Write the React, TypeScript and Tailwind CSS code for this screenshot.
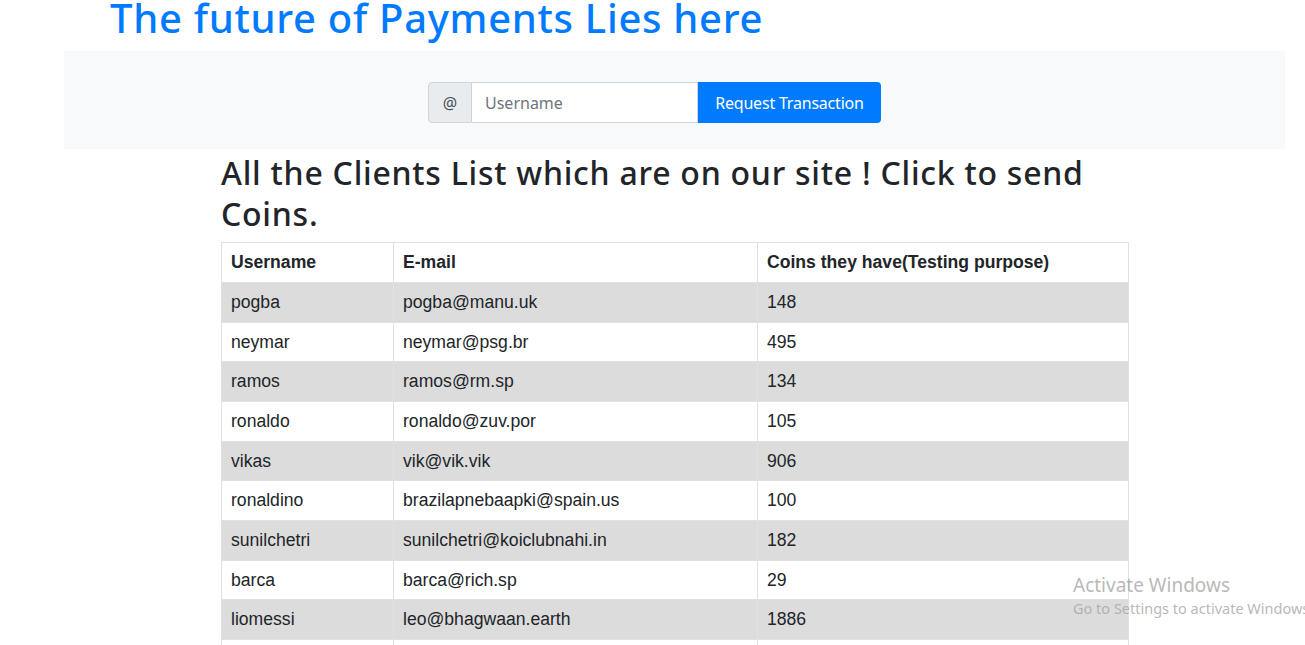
import React from "react";

const clients = [
  { username: "pogba", email: "pogba@manu.uk", coins: 148 },
  { username: "neymar", email: "neymar@psg.br", coins: 495 },
  { username: "ramos", email: "ramos@rm.sp", coins: 134 },
  { username: "ronaldo", email: "ronaldo@zuv.por", coins: 105 },
  { username: "vikas", email: "vik@vik.vik", coins: 906 },
  { username: "ronaldino", email: "brazilapnebaapki@spain.us", coins: 100 },
  { username: "sunilchetri", email: "sunilchetri@koiclubnahi.in", coins: 182 },
  { username: "barca", email: "barca@rich.sp", coins: 29 },
  { username: "liomessi", email: "leo@bhagwaan.earth", coins: 1886 },
  { username: "kaka", email: "kaka@milan.it", coins: 77 },
];

export default function App() {
  return (
    <div className="relative h-[645px] overflow-hidden bg-white text-[#212529]">
      <h1 className="ml-[110px] text-[40px] leading-[36px] font-medium text-[#007bff] font-['Noto_Sans',sans-serif] tracking-[0.7px]">
        The future of Payments Lies here
      </h1>

      <div className="ml-[64px] mt-[15px] w-[1221px] h-[98px] bg-[#f8f9fa] flex items-start justify-center pt-[31px] pr-[40px]">
        <div className="flex h-[41px] font-['Noto_Sans',sans-serif] text-[16px]">
          <span className="w-[44px] flex items-center justify-center bg-[#e9ecef] border border-[#ced4da] rounded-l-[4px] text-[#495057]">
            @
          </span>
          <input
            className="w-[226px] border border-l-0 border-[#ced4da] px-[13px] text-[#495057] placeholder:text-[#6c757d] outline-none bg-white"
            placeholder="Username"
          />
          <button className="w-[183px] bg-[#007bff] text-white rounded-r-[4px] tracking-[-0.2px]">
            Request Transaction
          </button>
        </div>
      </div>

      <div className="ml-[221px] w-[907px]">
        <h2 className="mt-[3px] mb-[8px] text-[32px] leading-[41px] font-medium font-['Noto_Sans',sans-serif] tracking-[0.75px]">
          All the Clients List which are on our site ! Click to send Coins.
        </h2>
        <table className="w-[907px] border-collapse font-['Liberation_Sans',sans-serif] text-[17.6px] table-fixed">
          <colgroup>
            <col className="w-[172px]" />
            <col className="w-[364px]" />
            <col className="w-[371px]" />
          </colgroup>
          <thead>
            <tr className="h-[40px]">
              <th className="border border-[#dee2e6] px-[9px] text-left font-bold">Username</th>
              <th className="border border-[#dee2e6] px-[9px] text-left font-bold">E-mail</th>
              <th className="border border-[#dee2e6] px-[9px] text-left font-bold">Coins they have(Testing purpose)</th>
            </tr>
          </thead>
          <tbody>
            {clients.map((c, i) => (
              <tr key={c.username} className={`h-[39.67px] ${i % 2 === 0 ? "bg-[#dcdcdc]" : "bg-white"}`}>
                <td className="border border-[#dee2e6] px-[9px]">{c.username}</td>
                <td className="border border-[#dee2e6] px-[9px]">{c.email}</td>
                <td className="border border-[#dee2e6] px-[9px]">{c.coins}</td>
              </tr>
            ))}
          </tbody>
        </table>
      </div>

      <div className="absolute left-[1073px] top-[573px] font-['Noto_Sans',sans-serif] text-[#a6a6a6]/80 whitespace-nowrap pointer-events-none">
        <div className="text-[19px] leading-[25px]">Activate Windows</div>
        <div className="text-[14.5px] leading-[20px]">Go to Settings to activate Windows.</div>
      </div>
    </div>
  );
}
